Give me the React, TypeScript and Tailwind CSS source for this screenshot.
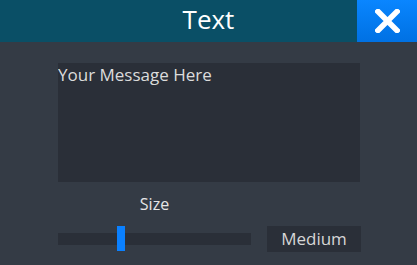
const font = { fontFamily: '"Open Sans", "Noto Sans", sans-serif' };

export default function App() {
  return (
    <div style={font} className="flex h-[265px] w-[417px] flex-col overflow-hidden bg-[#343b45]">
      {/* Header */}
      <header className="relative flex h-[42px] shrink-0 items-center justify-center bg-[#0a4f66] pb-[4px]">
        <h1 className="text-[26px] leading-[26px] text-white">Text</h1>
        <button className="absolute right-0 top-0 flex h-[42px] w-[60px] items-center justify-center bg-gradient-to-b from-[#0a86ff] to-[#0071e3]">
          <svg width="25" height="24" viewBox="0 0 25 24">
            <path d="M3 2.5 L22 21.5 M22 2.5 L3 21.5" stroke="white" strokeWidth="5.5" strokeLinecap="square" />
          </svg>
        </button>
      </header>

      {/* Body */}
      <main className="flex flex-col pl-[58px] pt-[21px]">
        <textarea
          defaultValue="Your Message Here"
          spellCheck={false}
          style={font}
          className="h-[119px] w-[302px] resize-none bg-[#2a2f38] px-[0px] pt-[0px] text-[17px] leading-[23px] text-[#dcdcdc] outline-none"
        />

        <div className="mt-[11px] flex items-end">
          <div className="flex w-[193px] shrink-0 flex-col items-center">
            <span className="text-[16px] leading-[22px] text-[#e6e6e6]">Size</span>
            <div className="relative mt-[11px] flex h-[26px] w-full items-center">
              <div className="h-[12px] w-full bg-[#2a2f38]" />
              <div className="absolute left-[59px] top-0 h-[25px] w-[8px] bg-[#0a80ff]" />
            </div>
          </div>
          <div className="ml-[16px] flex h-[26px] w-[94px] shrink-0 items-center justify-center bg-[#2a2f38] text-[17px] leading-[22px] text-[#d6d6d6]">
            Medium
          </div>
        </div>
      </main>
    </div>
  );
}
